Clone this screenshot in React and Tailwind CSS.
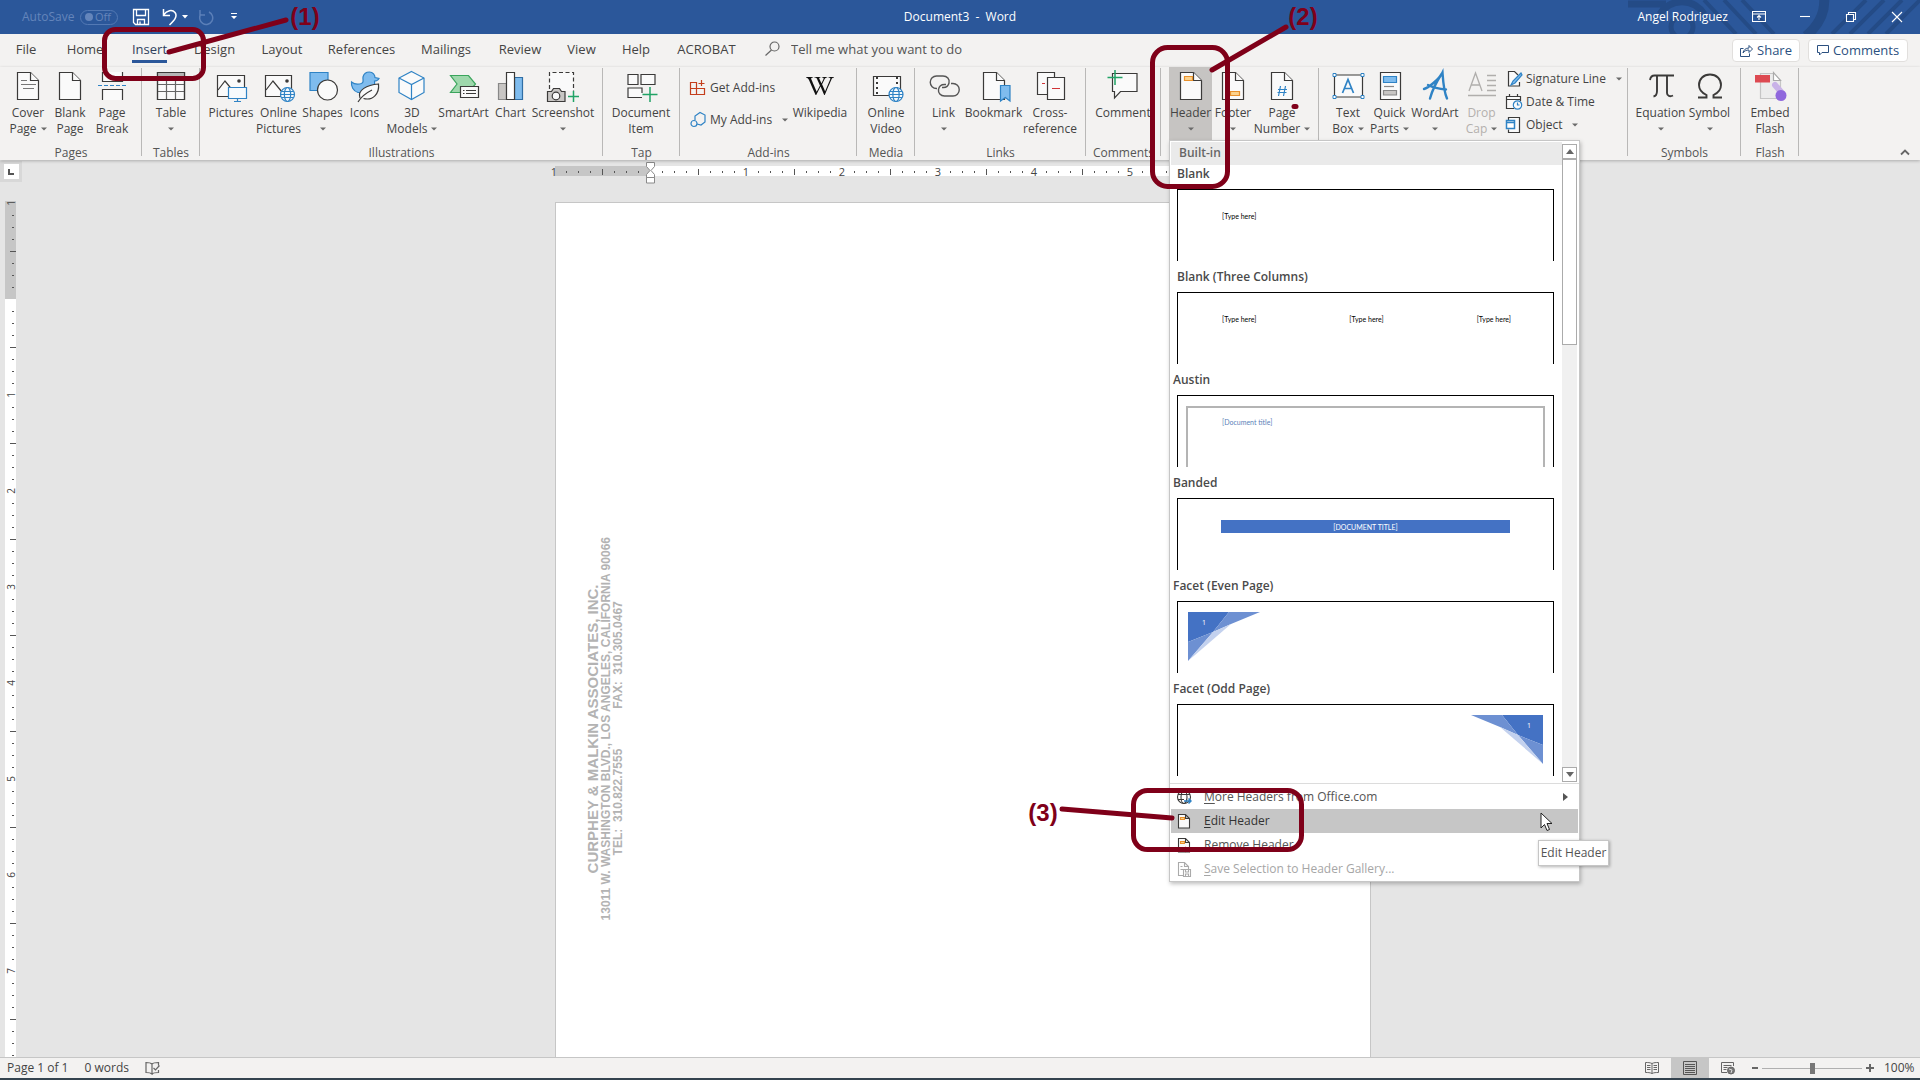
import React from "react";
import { FaWikipediaW } from "react-icons/fa";

const INK = "#3b3a39";
const BLUE = "#2f83c5";
const SKY = "#7fbcee";

/* ---------- shared drawing parts ---------- */

function Ico({ children }) {
  return (
    <svg viewBox="0 0 32 34" className="block h-[34px] w-8 shrink-0 overflow-visible" fill="none" stroke={INK} strokeWidth="1.2" aria-hidden="true">
      {children}
    </svg>
  );
}

function Sheet({ x = 5.5 }) {
  return (
    <g fill="#fafafa">
      <path d={`M${x} 1.5h13l8 8v19h-21z`} />
      <path d={`M${x + 13} 1.5v8h8`} />
    </g>
  );
}

function Globe({ cx, cy, r = 7 }) {
  return (
    <g stroke={BLUE} fill="#f3f8fc" strokeWidth="1.2">
      <circle cx={cx} cy={cy} r={r} />
      <ellipse cx={cx} cy={cy} rx={r * 0.45} ry={r} fill="none" />
      <path d={`M${cx - r} ${cy}h${2 * r}M${cx - r + 1} ${cy - 3}h${2 * r - 2}M${cx - r + 1} ${cy + 3}h${2 * r - 2}`} />
    </g>
  );
}

function Caret({ className = "" }) {
  return (
    <svg viewBox="0 0 6 4" className={"inline-block h-1 w-1.5 shrink-0 " + className} fill="#6a6a6a" aria-hidden="true">
      <path d="M0 .5h6L3 3.5z" />
    </svg>
  );
}

const icons = {
  cover: (
    <Ico>
      <Sheet />
      <path d="M9 9.5h6M9 13.5h15M11 17.5h11" stroke="#777" />
    </Ico>
  ),
  blank: <Ico><Sheet /></Ico>,
  pageBreak: (
    <Ico>
      <path d="M6.5 1v9.500h20V1" fill="#fafafa" />
      <path d="M6.500 29v-10.500h20V29" fill="#fafafa" />
      <path d="M2 14.500h29" stroke={BLUE} strokeDasharray="4 2" />
    </Ico>
  ),
  table: (
    <Ico>
      <path d="M2.500 1.500h27v27h-27z" fill="#fafafa" />
      <path d="M3 2h26v4.500H3z" fill="#b5b5b5" stroke="none" />
      <path d="M2.500 6.500h27M2.500 13.500h27M2.500 20.500h27M11.500 6.500v22M20.500 6.500v22" stroke="#666" />
      <path d="M2.500 1.500h27v27h-27z" />
    </Ico>
  ),
  pictures: (
    <Ico>
      <path d="M2.500 4.500h27v21h-27z" fill="#fafafa" />
      <path d="M3 19l7-9 9 11" />
      <circle cx="24" cy="10" r="1.800" fill={INK} stroke="none" />
      <g stroke={BLUE} fill="#f6fafd">
        <path d="M13.500 16.500h18v11h-18z" />
        <path d="M22.500 27.500v3M19 30.500h7" />
      </g>
    </Ico>
  ),
  onlinePictures: (
    <Ico>
      <path d="M2.500 4.500h26v21h-26z" fill="#fafafa" />
      <path d="M3 19l7-9 9 11" />
      <circle cx="24" cy="10" r="1.800" fill={INK} stroke="none" />
      <Globe cx={24.500} cy={23.500} />
    </Ico>
  ),
  shapes: (
    <Ico>
      <path d="M3 1.500h18v18H3z" fill={SKY} stroke={BLUE} />
      <circle cx="20.500" cy="19" r="10" fill="#fafafa" />
    </Ico>
  ),
  icons: (
    <Ico>
      <path d="M2.500 11c3 2.500 7 2.500 10 1.500 3-1.500 1-3.500 1.500-6.500C15 2 18 1 20.500 1c3.500 0 5.500 3 5.500 5.500l4 1c-1 2-2.500 2.500-4.500 2.500 1 5-1 10.500-7 11.500H9C4 20 2 15 2.500 11z" fill={SKY} stroke={BLUE} />
      <path d="M11 27c-3-8 7-13 18.500-14 1 9-5 17-15 14.500" fill="#fafafa" />
      <path d="M9 31c3-5 8-9 14-12" />
    </Ico>
  ),
  cube: (
    <Ico>
      <path d="M15.500.500l12.500 6.500v14.500L15.500 28.500 3 21.500V7z" fill="#fafafa" stroke={BLUE} />
      <path d="M3 7l12.500 6.500L28 7M15.500 13.500v15" stroke={BLUE} />
    </Ico>
  ),
  smartArt: (
    <Ico>
      <path d="M2.500 4.500h18l7 8.500-7 8.500h-18L9 13z" fill="#9ed8ac" stroke="#3ba55d" />
      <path d="M12.500 15.500h18v11h-18z" fill="#fafafa" />
      <path d="M15 19.500h1.500M18 19.500h10M15 22.500h1.500M18 22.500h10" />
    </Ico>
  ),
  chart: (
    <Ico>
      <path d="M3.500 12.500h8v16h-8z" fill="#c8c6c4" stroke="#888" />
      <path d="M19.500 6.500h8v22h-8z" fill={SKY} stroke="#2f6ea5" />
      <path d="M11.500 1.500h8v27h-8z" fill="#fff" />
    </Ico>
  ),
  screenshot: (
    <Ico>
      <path d="M2.500 18V1.500h24V20" strokeDasharray="4 2.500" fill="#fafafa" />
      <path d="M.500 20.500h4l2-3h6l2 3h3.500v10H.500z" fill="#c8c6c4" />
      <circle cx="9" cy="25" r="3.800" fill="#fafafa" />
      <path d="M26.500 20v11M21 25.500h11" stroke="#21a366" strokeWidth="1.500" />
    </Ico>
  ),
  documentItem: (
    <Ico>
      <path d="M3 3.500h10v10H3zM16 3.500h14v10H16z" fill="#fafafa" />
      <path d="M17 22v-5H3v9.500h14" fill="#fafafa" />
      <path d="M25 16v15M17.500 23.500h15" stroke="#21a366" strokeWidth="1.500" />
    </Ico>
  ),
  wikipedia: (
    <span className="flex h-[34px] items-center pb-1">
      <FaWikipediaW size={28} color="#111" aria-hidden="true" />
    </span>
  ),
  video: (
    <Ico>
      <path d="M3.500 5.500h27v19h-27z" fill="#fafafa" />
      <path d="M7 6v18M27 6v18" strokeWidth="2" strokeDasharray="2 3" />
      <Globe cx={26} cy={23.500} />
    </Ico>
  ),
  link: (
    <Ico>
      <g strokeWidth="1.400" stroke="#555">
        <path d="M9 17.500H8.500a6 6 0 0 1 0-12.500H15c4 0 7 3 6 7-.700 3-3 4.500-5.500 4.500H14" />
        <path d="M23 12.500h2a6 6 0 0 1 0 12.500h-8.500c-4 0-6.500-3-6-6.500.500-3 3-5 6-5H18" />
      </g>
    </Ico>
  ),
  bookmark: (
    <Ico>
      <Sheet />
      <path d="M22.500 14.500h9.500v15.500l-4.700-3.500-4.800 3.500z" fill={SKY} stroke={BLUE} />
    </Ico>
  ),
  crossRef: (
    <Ico>
      <path d="M3.500 1.500h17v22h-17z" fill="#fafafa" />
      <path d="M13.500 6.500h17v22h-17z" fill="#fafafa" />
      <path d="M18 17.500h8M8 12.500h3" stroke="#d13438" />
    </Ico>
  ),
  comment: (
    <Ico>
      <path d="M5.500 2.500h24.500v18H13.500l-6 6.500v-6.500h-2z" fill="#fafafa" />
      <path d="M8 -1v15M.500 6.500h15" stroke="#21a366" strokeWidth="1.500" />
    </Ico>
  ),
  header: (
    <Ico>
      <Sheet />
      <path d="M9.500 5.500h8v4h-8z" fill="#fcd28c" stroke="#e8912d" />
    </Ico>
  ),
  footer: (
    <Ico>
      <Sheet />
      <path d="M13.500 20.500h9v4h-9z" fill="#fcd28c" stroke="#e8912d" />
    </Ico>
  ),
  pageNumber: (
    <Ico>
      <Sheet />
      <path d="M14.500 15l-2 10M19.500 15l-2 10M12 18.500h9M11.500 21.500h9" stroke={BLUE} />
    </Ico>
  ),
  textBox: (
    <Ico>
      <path d="M2.500 4h28v22h-28z" fill="#fafafa" />
      <g stroke={BLUE} fill="#fff">
        <path d="M1 2.500h3v3H1zM29 2.500h3v3h-3zM1 24.500h3v3H1zM29 24.500h3v3h-3z" strokeWidth="1" />
        <path d="M10.500 22L16 8.500 21.500 22M12.500 17.500h7" fill="none" strokeWidth="1.700" />
      </g>
    </Ico>
  ),
  quickParts: (
    <Ico>
      <path d="M6.500 1.500h20v27h-20z" fill="#fafafa" />
      <path d="M9.500 5.500h13v6h-13z" fill={SKY} stroke={BLUE} />
      <path d="M10 15.500h10" stroke="#888" />
      <path d="M9.500 19.500h13v4.500h-13z" fill="#c8c6c4" stroke="#888" />
    </Ico>
  ),
  wordArt: (
    <Ico>
      <path d="M5 18c4-1 15-9.500 18.500-16.500.500 7 1 18 4.500 26M9 14c6 3 12 4 18 4.500M22.500 3C18 10 13 20 11 27.500" stroke={BLUE} strokeWidth="2.400" strokeLinecap="round" />
    </Ico>
  ),
  dropCap: (
    <Ico>
      <g stroke="#b0aeac" strokeWidth="1.300">
        <path d="M3 20L9.500 2 16 20M5.500 14h8M21 4.500h9M21 9.500h9M21 14.500h9M21 19.500h9M2 24.500h28" />
      </g>
    </Ico>
  ),
  equation: (
    <Ico>
      <path d="M5 9c.500-3 2-4.500 4.500-4.500H29M12 5v15c0 3-1 5-3.500 5.500M22 5v17c0 3 3 4 6 2.500" strokeWidth="1.900" />
    </Ico>
  ),
  symbol: (
    <Ico>
      <path d="M4 26.500h8.500V24C7 21.500 5 17.500 5 14c0-6 4.500-10.500 11-10.500S27 8 27 14c0 3.500-2 7.500-7.500 10v2.500H28" strokeWidth="1.900" />
    </Ico>
  ),
  flash: (
    <Ico>
      <path d="M6.500 2.500h13l7 7v18h-20z" fill="#ececec" stroke="#c5c5c5" />
      <path d="M19.500 1.500v8h7z" fill="#fff" stroke="#aaa" />
      <path d="M1 4h15v7.500H1z" fill="#dd4a52" stroke="none" />
      <path d="M21 14l7 8" stroke="#c9b3e8" strokeWidth="6" strokeLinecap="round" />
      <circle cx="27" cy="24.500" r="5.500" fill="#9068dd" stroke="none" />
    </Ico>
  ),
};

/* ---------- ribbon ---------- */

function BigButton({ icon, lines, caret, width, disabled, active }) {
  const last = lines.length - 1;
  return (
    <button
      type="button"
      disabled={disabled}
      className={
        "flex h-[73px] shrink-0 flex-col items-center pt-1 " + width + " " +
        (active ? "bg-[#c6c4c2] " : "") + (disabled ? "text-[#b3b0ad]" : "text-[#444]")
      }
    >
      {icon}
      {lines.map((l, i) => (
        <span key={l} className="flex h-4 items-center whitespace-nowrap leading-4">
          {l}
          {caret && i === last && last > 0 && <Caret className="ml-1" />}
        </span>
      ))}
      {caret && last === 0 && <span className="flex h-4 items-center"><Caret /></span>}
    </button>
  );
}

function Group({ label, width, pad = "justify-center", covered, children }) {
  return (
    <section aria-label={label} className={"relative flex shrink-0 flex-col " + width}>
      <div className={"flex h-[73px] " + pad}>{children}</div>
      <div className="flex h-5 items-center justify-center pt-1.5 leading-[14px] text-[#555]">{covered ? null : label}</div>
      <span className="absolute right-0 top-px h-[88px] w-px bg-[#b9b8b7]" />
    </section>
  );
}

function SmallButton({ icon, label, caret, gap = "ml-2.5", height = "h-[23px]" }) {
  return (
    <button type="button" className={"flex items-center whitespace-nowrap text-[#444] " + height}>
      <svg viewBox="0 0 16 16" className="mr-1 h-4 w-4 shrink-0 overflow-visible" fill="none" stroke={INK} strokeWidth="1.200" aria-hidden="true">{icon}</svg>
      {label}
      {caret && <Caret className={gap} />}
    </button>
  );
}

const tabs = [
  ["File", "w-[52px]"], ["Home", "w-[66px]"], ["Insert", "w-[63px]"], ["Design", "w-[67px]"],
  ["Layout", "w-[68px]"], ["References", "w-[91px]"], ["Mailings", "w-[78px]"], ["Review", "w-[70px]"],
  ["View", "w-[53px]"], ["Help", "w-[56px]"], ["ACROBAT", "w-[85px]"],
];

function TitleBar() {
  return (
    <header className="relative grid h-[34px] shrink-0 grid-cols-[1fr_auto_1fr] items-center bg-[#2b579a] text-white">
      <svg viewBox="0 0 292 34" className="absolute right-0 top-0 h-[34px] w-[292px]" fill="none" stroke="#244b86" aria-hidden="true">
        <circle cx="54" cy="27" r="11" strokeWidth="5" />
        <path d="M0 4h38M32 14a26 26 0 0 1 44 0" strokeWidth="7" />
        <path d="M76 0l32 34M96 0l32 34M114 0l32 34" strokeWidth="4" />
        <path d="M196 -4c2 18-6 30-18 40" strokeWidth="10" />
        <path d="M238 0l-34 34M256 0l-34 34M274 0l-34 34M292 0l-34 34" strokeWidth="4" />
      </svg>
      <div className="relative flex items-center pl-[22px]">
        <label className="flex items-center gap-2 text-[#6485bb]">
          <span className="w-[50px]">AutoSave</span>
          <input type="checkbox" className="peer sr-only" disabled />
          <span className="flex h-[15px] w-[38px] items-center justify-between rounded-full border border-[#5379b4] pl-1 pr-1.5 text-[11px] leading-3">
            <span className="h-2 w-2 rounded-full bg-[#6485bb]" />Off
          </span>
        </label>
        <button type="button" aria-label="Save" className="ml-3.5">
          <svg width="18" height="18" viewBox="0 0 18 18" fill="none" stroke="#fff" strokeWidth="1.300"><path d="M1.500 1.500h15v15h-13l-2-2zM4.500 1.500v6h9v-6M5.500 16.500v-5h7v5M8 16.500v-3" /></svg>
        </button>
        <button type="button" aria-label="Undo" className="ml-3 flex items-center">
          <svg width="16" height="18" viewBox="0 0 16 18" fill="none" stroke="#fff" strokeWidth="1.500"><path d="M1.500 1v6.500H8M1.500 7C5 2.500 10 1 13 4.500c3 4-1 8-5.500 12.500" /></svg>
          <svg width="6" height="4" viewBox="0 0 6 4" fill="#fff" className="ml-1"><path d="M0 0h6L3 3.500z" /></svg>
        </button>
        <button type="button" aria-label="Redo" disabled className="ml-2.5">
          <svg width="16" height="18" viewBox="0 0 16 18" fill="none" stroke="#5b7fb8" strokeWidth="1.500"><path d="M2 2v5h5M3 6a6.500 6.500 0 1 0 8-2" /></svg>
        </button>
        <button type="button" aria-label="Customize Quick Access Toolbar" className="ml-4">
          <svg width="8" height="8" viewBox="0 0 8 8" fill="#fff"><path d="M1 0h6v1H1zM1 3h6L4 6z" /></svg>
        </button>
      </div>
      <h1 className="relative whitespace-pre">Document3  -  Word</h1>
      <div className="relative flex h-full items-center justify-end">
        <span className="mr-2">Angel Rodriguez</span>
        {[
          ["Ribbon Display Options", <path key="a" d="M.500 1.500h13v10H.500zM.500 4h13M7 10V5.500M5 7.500l2-2 2 2" />],
          ["Minimize", <path key="b" d="M2 6.500h10" />],
          ["Restore", <path key="c" d="M2.500 4.500h7v7h-7zM4.500 4.500v-2h7v7h-2" />],
          ["Close", <path key="d" d="M2 2l10 10M12 2L2 12" />],
        ].map(([n, d]) => (
          <button key={n} type="button" aria-label={n} className="flex h-full w-[46px] items-center justify-center">
            <svg width="14" height="14" viewBox="0 0 14 14" fill="none" stroke="#fff" strokeWidth="1.100">{d}</svg>
          </button>
        ))}
      </div>
    </header>
  );
}

function TabRow() {
  return (
    <nav className="flex h-[33px] shrink-0 items-center bg-[#f3f2f1] text-[13px] text-[#444]">
      {tabs.map(([t, w]) => (
        <button key={t} type="button" className={"flex h-full shrink-0 flex-col items-center pt-1.5 leading-[19px] " + w}>
          <span className={t === "Insert" ? "border-b-3 border-[#2b579a] pb-px text-[#2f3f5c]" : ""}>{t}</span>
        </button>
      ))}
      <label className="ml-4 flex items-center gap-[11px] pb-1">
        <svg width="15" height="15" viewBox="0 0 15 15" fill="none" stroke="#666" strokeWidth="1.200" aria-hidden="true"><circle cx="9.500" cy="5.500" r="4.500" /><path d="M6.500 9L.500 14.500" /></svg>
        <input aria-label="Tell me what you want to do" placeholder="Tell me what you want to do" className="w-[190px] bg-transparent outline-none placeholder:text-[#555]" />
      </label>
      <div className="ml-auto flex gap-2 pb-px pr-3">
        <button type="button" className="flex h-[23px] w-[68px] items-center justify-center gap-1 rounded-sm border border-[#e1dfdd] bg-white text-[#2b5080]">
          <svg width="13" height="13" viewBox="0 0 13 13" fill="none" stroke="currentColor" aria-hidden="true"><path d="M3.500 4.500h-3v8h9v-3M3 9c.500-3 2.500-5 6-5V1.500L12.500 5 9 8.500V6C6 6 4.500 7 3 9z" /></svg>
          Share
        </button>
        <button type="button" className="flex h-[23px] w-[100px] items-center justify-center gap-1 rounded-sm border border-[#e1dfdd] bg-white text-[#2b5080]">
          <svg width="12" height="12" viewBox="0 0 12 12" fill="none" stroke="currentColor" aria-hidden="true"><path d="M.500 1.500h11v7H5L2.500 11V8.500h-2z" /></svg>
          Comments
        </button>
      </div>
    </nav>
  );
}

function Ribbon() {
  return (
    <div className="relative z-10 flex h-[93px] shrink-0 bg-[#f3f2f1] shadow-[0_1px_3px_rgba(0,0,0,0.25)]">
      <Group label="Pages" width="w-[142px]" pad="pl-[7px]">
        <BigButton icon={icons.cover} lines={["Cover", "Page"]} caret width="w-[42px]" />
        <BigButton icon={icons.blank} lines={["Blank", "Page"]} width="w-[42px]" />
        <BigButton icon={icons.pageBreak} lines={["Page", "Break"]} width="w-[42px]" />
      </Group>
      <Group label="Tables" width="w-[58px]">
        <BigButton icon={icons.table} lines={["Table"]} caret width="w-[46px]" />
      </Group>
      <Group label="Illustrations" width="w-[403px]" pad="pl-[7px]">
        <BigButton icon={icons.pictures} lines={["Pictures"]} width="w-[48px]" />
        <BigButton icon={icons.onlinePictures} lines={["Online", "Pictures"]} width="w-[47px]" />
        <BigButton icon={icons.shapes} lines={["Shapes"]} caret width="w-[41px]" />
        <BigButton icon={icons.icons} lines={["Icons"]} width="w-[43px]" />
        <BigButton icon={icons.cube} lines={["3D", "Models"]} caret width="w-[52px]" />
        <BigButton icon={icons.smartArt} lines={["SmartArt"]} width="w-[51px]" />
        <BigButton icon={icons.chart} lines={["Chart"]} width="w-[43px]" />
        <BigButton icon={icons.screenshot} lines={["Screenshot"]} caret width="w-[62px]" />
      </Group>
      <Group label="Tap" width="w-[77px]" pad="pl-[7px]">
        <BigButton icon={icons.documentItem} lines={["Document", "Item"]} width="w-[62px]" />
      </Group>
      <Group label="Add-ins" width="w-[177px]" pad="pl-[10px]">
        <div className="flex w-[100px] flex-col pt-[5px]">
          <SmallButton
            height="h-8" label="Get Add-ins"
            icon={<path d="M.500 2.500h6v12h-6zM.500 8.500h14M6.500 8.500h8v6h-8M11.500 0v6M8.500 3.500h6" stroke="#c43e1c" />}
          />
          <SmallButton
            height="h-8" label="My Add-ins" caret
            icon={<g stroke={BLUE}><path d="M5 8V4l5-3.500 5 2.500v7l-4 3-4-1" /><circle cx="4" cy="11.500" r="3" /></g>}
          />
        </div>
        <BigButton icon={icons.wikipedia} lines={["Wikipedia"]} width="w-[60px]" />
      </Group>
      <Group label="Media" width="w-[58px]">
        <BigButton icon={icons.video} lines={["Online", "Video"]} width="w-[46px]" />
      </Group>
      <Group label="Links" width="w-[171px]" pad="pl-[7px]">
        <BigButton icon={icons.link} lines={["Link"]} caret width="w-[43px]" />
        <BigButton icon={icons.bookmark} lines={["Bookmark"]} width="w-[57px]" />
        <BigButton icon={icons.crossRef} lines={["Cross-", "reference"]} width="w-[56px]" />
      </Group>
      <Group label="Comments" width="w-[75px]" pad="pl-[7px]">
        <BigButton icon={icons.comment} lines={["Comment"]} width="w-[60px]" />
      </Group>
      <Group label="Header & Footer" width="w-[158px]" pad="pl-2" covered>
        <div className="relative">
          <BigButton icon={icons.header} lines={["Header"]} caret active width="w-[43px]" />
          <HeaderMenu />
        </div>
        <BigButton icon={icons.footer} lines={["Footer"]} caret width="w-[42px]" />
        <BigButton icon={icons.pageNumber} lines={["Page", "Number"]} caret width="w-[56px]" />
      </Group>
      <Group label="Text" width="w-[309px]" pad="pl-2" covered>
        <BigButton icon={icons.textBox} lines={["Text", "Box"]} caret width="w-[42px]" />
        <BigButton icon={icons.quickParts} lines={["Quick", "Parts"]} caret width="w-[41px]" />
        <BigButton icon={icons.wordArt} lines={["WordArt"]} caret width="w-[50px]" />
        <BigButton icon={icons.dropCap} lines={["Drop", "Cap"]} caret disabled width="w-[43px]" />
        <div className="flex flex-col items-start pl-[3px]">
          <SmallButton
            label="Signature Line" caret
            icon={<g><path d="M12 4L8.500.500h-6v14.500h11V11" fill="#fafafa" /><path d="M15 2L7 10l-2 4 4-2 7-8z" fill={SKY} stroke={BLUE} /></g>}
          />
          <SmallButton
            label="Date & Time"
            icon={<g><path d="M8 14.500H.500v-12h14V7M.500 5.500h14M3.500 0v3M11.500 0v3" fill="#fafafa" /><circle cx="11.500" cy="11" r="4.200" fill="#fafafa" stroke={BLUE} /><path d="M11.500 8.500V11h2" stroke={BLUE} /></g>}
          />
          <SmallButton
            label="Object" caret
            icon={<g><path d="M2.500 3V.500h11v15h-11v-3" fill="#fafafa" /><path d="M.500 3.500h8v8h-8zM.500 5.500h8" fill="#fff" stroke={BLUE} strokeWidth="1.500" /></g>}
          />
        </div>
      </Group>
      <Group label="Symbols" width="w-[113px]">
        <BigButton icon={icons.equation} lines={["Equation"]} caret width="w-[50px]" />
        <BigButton icon={icons.symbol} lines={["Symbol"]} caret width="w-[48px]" />
      </Group>
      <Group label="Flash" width="w-[58px]">
        <BigButton icon={icons.flash} lines={["Embed", "Flash"]} width="w-[46px]" />
      </Group>
      <button type="button" aria-label="Collapse the Ribbon" className="mb-1 ml-auto mr-2.5 self-end">
        <svg width="10" height="7" viewBox="0 0 10 7" fill="none" stroke="#666" strokeWidth="1.800"><path d="M1 5.500l4-4 4 4" /></svg>
      </button>
    </div>
  );
}

/* ---------- header gallery ---------- */

function Facet({ flip }) {
  return (
    <div className={"relative m-2.5 h-[50px] w-[72px] " + (flip ? "ml-auto" : "")}>
      <svg viewBox="0 0 72 50" className="h-full w-full" aria-hidden="true">
        <g transform={flip ? "translate(72 0) scale(-1 1)" : undefined}>
          <path d="M0 0h41L25 20 0 30z" fill="#4472c4" />
          <path d="M41 0h31L43 12 25 20zM0 30l25-10L0 49z" fill="#6d90d2" />
          <path d="M25 20l18-8L0 49z" fill="#c3d1ee" />
        </g>
      </svg>
      <span className={"absolute top-1.5 text-[7px] leading-[10px] text-white " + (flip ? "right-3" : "left-3.5")}>1</span>
    </div>
  );
}

const tiny = "font-['Lato',sans-serif] text-[7px] leading-[12px]";

const gallery = [
  ["Blank", "pl-[7px]", <div key="a" className={"pl-11 pt-5 text-black " + tiny}>[Type here]</div>],
  ["Blank (Three Columns)", "pl-[7px]", (
    <div key="b" className={"flex justify-between pl-11 pr-[42px] pt-5 text-black " + tiny}>
      <span>[Type here]</span><span>[Type here]</span><span>[Type here]</span>
    </div>
  )],
  ["Austin", "pl-[3px]", (
    <div key="c" className={"mx-2 mt-2.5 h-[61px] border-2 border-b-0 border-[#b4b4b4] pl-[34px] pt-2 text-[#5b7fb8] " + tiny}>[Document title]</div>
  )],
  ["Banded", "pl-[3px]", (
    <div key="d" className={"mx-[43px] mt-[21px] flex h-[13px] items-center justify-center bg-[#4472c4] text-white " + tiny}>[DOCUMENT TITLE]</div>
  )],
  ["Facet (Even Page)", "pl-[3px]", <Facet key="e" />],
  ["Facet (Odd Page)", "pl-[3px]", <Facet key="f" flip />],
];

function MenuRow({ icon, first, rest, state = "" }) {
  return (
    <button type="button" disabled={state === "disabled"} className={
      "mx-px flex h-6 items-center gap-3 pl-[5px] " +
      (state === "active" ? "bg-[#c6c6c6] text-[#333]" : state === "disabled" ? "text-[#a6a6a6]" : "text-[#555]")
    }>
      <svg width="16" height="16" viewBox="0 0 16 16" fill="none" stroke={state === "disabled" ? "#aaa" : INK} strokeWidth="1.100" aria-hidden="true">{icon}</svg>
      <span><span className="underline underline-offset-2">{first}</span>{rest}</span>
      {state === "submenu" && <svg width="5" height="8" viewBox="0 0 5 8" fill="#555" className="ml-auto mr-2.5" aria-hidden="true"><path d="M0 0l5 4-5 4z" /></svg>}
    </button>
  );
}

const miniSheet = <path d="M2.500 1.500h7l4 4v9.500h-11zM9.500 1.500v4h4" fill="#fafafa" />;
const miniBand = <path d="M4.500 4.500h4v2h-4z" stroke="#e8912d" fill="#fcd28c" />;

function HeaderMenu() {
  return (
    <div className="absolute left-0 top-full z-20 flex w-[411px] flex-col border border-[#c6c6c6] bg-white shadow-[1px_2px_4px_rgba(0,0,0,0.25)]">
      <div className="flex">
        <div className="min-w-0 flex-1">
          <div className="ml-px mt-px flex h-[23px] items-center bg-[#eaeaea] pb-0.5 pl-2 font-semibold text-[#666]">Built-in</div>
          {gallery.map(([name, pad, art]) => (
            <button key={name} type="button" className="block h-[103px] w-full text-left">
              <span className={"block h-5 font-semibold leading-[18px] text-[#4a4a4a] " + pad}>{name}</span>
              <span className="ml-[7px] mr-2 mt-1 mb-[7px] block h-[72px] overflow-hidden border border-b-0 border-black">{art}</span>
            </button>
          ))}
        </div>
        <div className="mb-px mr-0.5 mt-[3px] flex w-[15px] flex-col bg-[#f0f0f0]">
          <button type="button" aria-label="Scroll up" className="flex h-[15px] items-center justify-center border border-[#ababab] bg-white">
            <svg width="8" height="5" viewBox="0 0 8 5" fill="#666"><path d="M0 5l4-5 4 5z" /></svg>
          </button>
          <div className="h-[186px] border border-[#ababab] bg-white" />
          <button type="button" aria-label="Scroll down" className="mt-auto flex h-[15px] items-center justify-center border border-[#ababab] bg-white">
            <svg width="8" height="5" viewBox="0 0 8 5" fill="#666"><path d="M0 0l4 5 4-5z" /></svg>
          </button>
        </div>
      </div>
      <div className="mb-px h-px bg-[#dcdcdc]" />
      <MenuRow first="M" rest="ore Headers from Office.com" state="submenu"
        icon={<g><circle cx="8" cy="8" r="6.500" /><ellipse cx="8" cy="8" rx="3" ry="6.500" /><path d="M2 5.500h12M2 10.500h6" /><path d="M8 12h7M12.500 9.500L15 12l-2.500 2.500" stroke={BLUE} strokeWidth="1.500" /></g>} />
      <MenuRow first="E" rest="dit Header" state="active" icon={<g>{miniSheet}{miniBand}</g>} />
      <MenuRow first="R" rest="emove Header" icon={<g>{miniSheet}{miniBand}<path d="M9 10l5 5M14 10l-5 5" stroke="#d13438" /></g>} />
      <MenuRow first="S" rest="ave Selection to Header Gallery..." state="disabled"
        icon={<g><path d="M7 14.500H2.500v-13h6l4 4V8M8.500 1.500v4h4M4.500 5.500h2M4.500 8.500h3" /><path d="M7.500 8.500h7v7h-7zM9.500 8.500v2.500h3V8.500M9.500 15.500V13h3v2.500" /></g>} />
      <svg width="13" height="20" viewBox="0 0 13 20" className="absolute left-[370px] top-[671px]" fill="#fff" stroke="#222" aria-hidden="true">
        <path d="M1 1v15l3.500-3.500L7 18.500l2.500-1L7 11.500h5z" />
      </svg>
      <div role="tooltip" className="absolute left-[368px] top-[699px] flex h-[26px] w-[71px] items-center justify-center whitespace-nowrap border border-[#c6c6c6] bg-white text-[#555] shadow-[1px_1px_3px_rgba(0,0,0,0.3)]">
        Edit Header
      </div>
    </div>
  );
}

/* ---------- rulers and document ---------- */

function cellsFor(count) {
  return Array.from({ length: count }, (_, i) => {
    const n = i - 8;
    if (n === 0) return "";
    if (n % 8 === 0) return String(Math.abs(n / 8));
    return n % 4 === 0 ? "half" : "dot";
  });
}

function HorizontalRuler() {
  return (
    <div className="relative mt-1.5 flex h-[10px] w-[816px] bg-[linear-gradient(90deg,#c6c6c6_96px,#fff_96px)]">
      <div className="absolute -left-[7px] top-0 flex">
        {cellsFor(65).map((c, i) => (
          <span key={i} className="flex h-[11px] w-3 items-center justify-center text-[11px] leading-[11px] text-[#444]">
            {c === "dot" ? <i className="h-0.5 w-px bg-[#555]" /> : c === "half" ? <i className="h-1.5 w-px bg-[#555]" /> : c}
          </span>
        ))}
      </div>
      <svg width="10" height="22" viewBox="0 0 10 22" className="absolute -top-1 left-[91px]" fill="#fff" stroke="#8a8a8a" aria-hidden="true">
        <path d="M.500.500h8v4L5 8.500l3.500 4v3h-8v-3l3.500-4-3.500-4zM.500 15.500h8v5.500h-8z" />
      </svg>
    </div>
  );
}

function VerticalRuler() {
  return (
    <div className="relative ml-[5px] w-[11px] flex-1 bg-[linear-gradient(180deg,#c6c6c6_98px,#fff_98px)]">
      <div className="absolute inset-x-0 -top-1 flex flex-col">
        {cellsFor(72).map((c, i) => (
          <span key={i} className="flex h-3 w-full shrink-0 items-center justify-center text-[10px] leading-3 text-[#444]">
            {c === "dot" ? <i className="ml-1 h-px w-0.5 bg-[#555]" /> : c === "half" ? <i className="ml-1 h-px w-1.5 bg-[#555]" /> : <b className="-rotate-90 font-normal">{c}</b>}
          </span>
        ))}
      </div>
    </div>
  );
}

function Workspace() {
  return (
    <main className="flex min-h-0 flex-1 overflow-hidden bg-[#e5e5e5]">
      <div className="flex w-[22px] shrink-0 flex-col">
        <div className="mb-[19px] mt-px flex h-[21px] w-[22px] items-center justify-center bg-[#d8d8d8]">
          <button type="button" aria-label="Left tab" className="flex h-[15px] w-[15px] items-center justify-center bg-white">
            <svg width="6" height="6" viewBox="0 0 6 6" fill="none" stroke="#555" strokeWidth="2"><path d="M1 0v5h5" /></svg>
          </button>
        </div>
        <VerticalRuler />
      </div>
      <div className="flex min-w-0 flex-1 flex-col items-center pr-4">
        <div className="h-[42px] shrink-0"><HorizontalRuler /></div>
        <article className="w-[816px] flex-1 border border-b-0 border-[#c6c6c6] bg-white">
          <div className="flex h-full items-start pl-[30px] pt-[334px]">
            <div className="flex rotate-180 flex-col items-center text-center font-['Liberation_Sans',Arial,sans-serif] font-bold text-[#b3b3b3] [writing-mode:vertical-rl]">
              <p className="whitespace-pre text-[15px] leading-[14px]">CURPHEY &amp; MALKIN ASSOCIATES, INC.</p>
              <p className="whitespace-pre text-[12px] leading-3">13011 W. WASHINGTON BLVD., LOS ANGELES, CALIFORNIA 90066</p>
              <p className="whitespace-pre text-[12px] leading-3">TEL:  310.822.7555            FAX:  310.305.0467</p>
            </div>
          </div>
        </article>
      </div>
    </main>
  );
}

function StatusBar() {
  return (
    <footer className="flex h-[23px] shrink-0 items-stretch border-b-2 border-t border-b-[#34434f] border-t-[#c6c6c6] bg-[#f3f2f1] text-[#444]">
      <span className="flex items-center pl-[7px]">Page 1 of 1</span>
      <span className="flex items-center pl-4">0 words</span>
      <button type="button" aria-label="Proofing" className="ml-4">
        <svg width="15" height="14" viewBox="0 0 15 14" fill="none" stroke="#666" strokeWidth="1.200"><path d="M7 3C5.500 1.500 3 1.500 1 1.500v10c2 0 4.500 0 6 1.500zM7 3c1.500-1.500 4-1.500 6.500-1.500v3M7 13c1.500-1.500 4-1.500 6.500-1.500V9M8.500 7l2 2 4-4.500" /></svg>
      </button>
      <div className="ml-auto flex items-center">
        <button type="button" aria-label="Read Mode" className="flex h-full w-[38px] items-center justify-center">
          <svg width="14" height="14" viewBox="0 0 14 14" fill="none" stroke="#666"><path d="M7 2.500C5 1.500 3 1.500.500 1.500v10c2.500 0 4.500 0 6.500 1 2-1 4-1 6.500-1v-10c-2.500 0-4.500 0-6.500 1zv10M2 4.500h3.500M2 6.500h3.500M2 8.500h3.500M8.500 4.500H12M8.500 6.500H12M8.500 8.500H12" /></svg>
        </button>
        <button type="button" aria-label="Print Layout" className="flex h-full w-[38px] items-center justify-center bg-[#c6c6c6]">
          <svg width="14" height="14" viewBox="0 0 14 14" fill="none" stroke="#555"><path d="M.500.500h13v13H.500zM2 3.500h10M2 5.500h10M2 7.500h10M2 9.500h10M2 11.500h10" /></svg>
        </button>
        <button type="button" aria-label="Web Layout" className="flex h-full w-[38px] items-center justify-center">
          <svg width="14" height="14" viewBox="0 0 14 14" fill="none" stroke="#666"><path d="M6 11.500H.500v-10h12V5M2.500 4.500h8M2.500 6.500h4M2.500 8.500h3" /><circle cx="10" cy="9.500" r="3.500" fill="#777" /><path d="M8 8l3 1-1 3" stroke="#ddd" /></svg>
        </button>
        <button type="button" aria-label="Zoom out" className="ml-[5px] h-0.5 w-1.5 bg-[#666]" />
        <input
          type="range" aria-label="Zoom" defaultValue="50"
          className="mx-1 h-3 w-[100px] appearance-none bg-[linear-gradient(#b0b0b0,#b0b0b0)] bg-[length:100%_1px] bg-center bg-no-repeat [&::-webkit-slider-thumb]:h-[11px] [&::-webkit-slider-thumb]:w-[5px] [&::-webkit-slider-thumb]:appearance-none [&::-webkit-slider-thumb]:bg-[#777]"
        />
        <button type="button" aria-label="Zoom in">
          <svg width="8" height="8" viewBox="0 0 8 8" stroke="#666" strokeWidth="2"><path d="M0 4h8M4 0v8" /></svg>
        </button>
        <span className="ml-2.5 w-9">100%</span>
      </div>
    </footer>
  );
}

/* ---------- step call-outs ---------- */

function CallOuts() {
  return (
    <svg viewBox="0 0 1920 1080" className="pointer-events-none absolute left-0 top-0 z-30 h-[1080px] w-[1920px]" fill="none" stroke="#7f0019" strokeWidth="5" strokeLinecap="round">
      <rect x="104.500" y="29.500" width="99" height="49" rx="11" />
      <path d="M169 52L286 20" />
      <rect x="1152.500" y="47.500" width="75" height="139" rx="15" />
      <path d="M1212 70L1286 27" />
      <rect x="1133.500" y="790.500" width="168" height="59" rx="14" />
      <path d="M1062 809L1172 818" />
      <path d="M1294 106.500h2" />
      <g fill="#7f0019" stroke="none" className="font-['Liberation_Sans',Arial,sans-serif] text-[24px] font-bold" textAnchor="middle">
        <text x="305" y="25">(1)</text>
        <text x="1303" y="25">(2)</text>
        <text x="1043" y="821">(3)</text>
      </g>
    </svg>
  );
}

export default function App() {
  return (
    <div className="relative flex h-screen flex-col overflow-hidden font-['Open_Sans','Noto_Sans',sans-serif] text-[12px] leading-4">
      <TitleBar />
      <TabRow />
      <Ribbon />
      <Workspace />
      <StatusBar />
      <CallOuts />
    </div>
  );
}
